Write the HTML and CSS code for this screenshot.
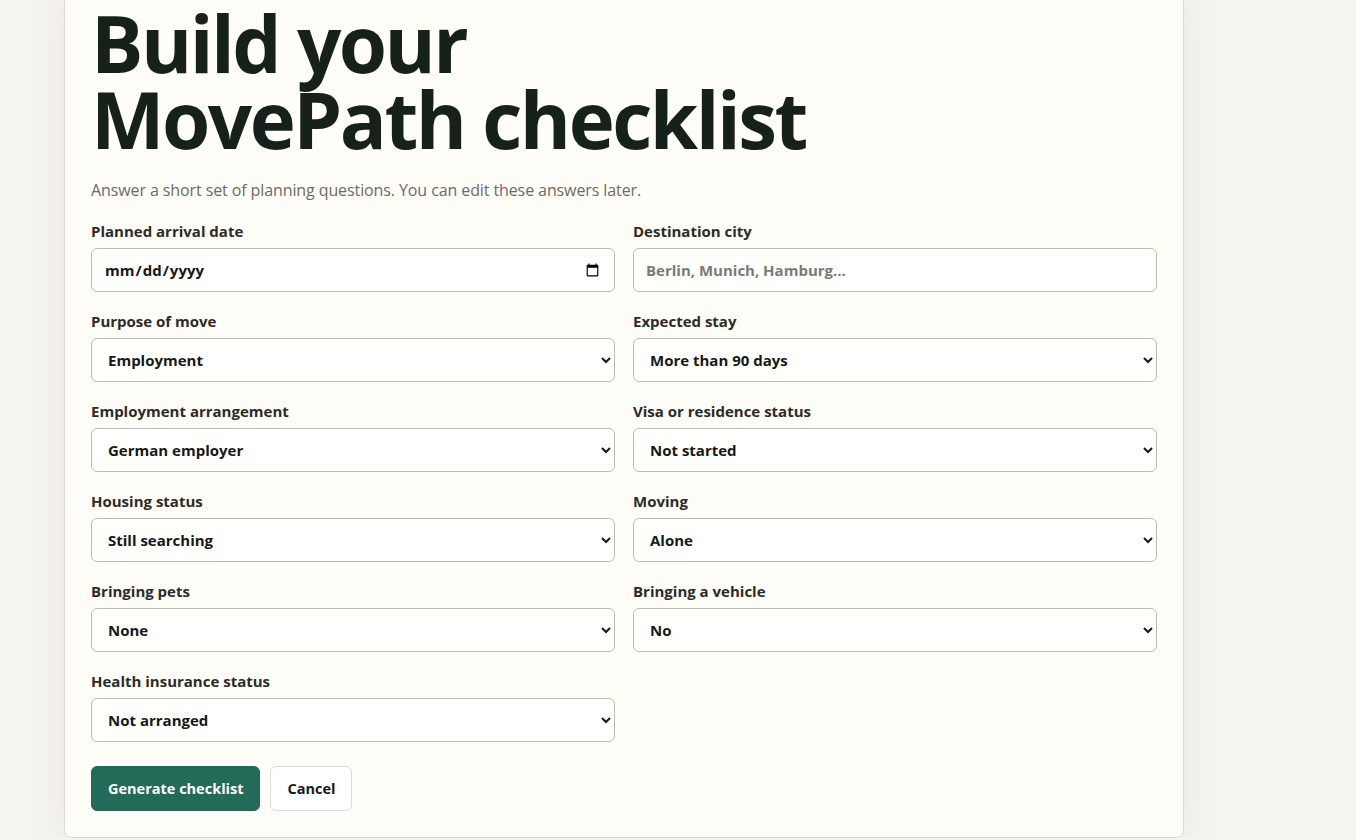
FILE: index.html
```html
<!DOCTYPE html>
<html lang="en">
<head>
    <meta charset="UTF-8">
    <meta name="viewport" content="width=device-width, initial-scale=1.0">
    <title>Build your MovePath checklist</title>
    <link rel="stylesheet" href="styles.css">
</head>
<body>
    <main class="page">
        <section class="card">
            <h1>Build your<br>MovePath checklist</h1>
            <p class="intro">Answer a short set of planning questions. You can edit these answers later.</p>

            <form class="form-grid" onsubmit="return false;">
                <div class="field">
                    <label for="arrival">Planned arrival date</label>
                    <input type="date" id="arrival">
                </div>
                <div class="field">
                    <label for="city">Destination city</label>
                    <input type="text" id="city" placeholder="Berlin, Munich, Hamburg...">
                </div>

                <div class="field">
                    <label for="purpose">Purpose of move</label>
                    <select id="purpose">
                        <option>Employment</option>
                        <option>Study</option>
                        <option>Family</option>
                    </select>
                </div>
                <div class="field">
                    <label for="stay">Expected stay</label>
                    <select id="stay">
                        <option>More than 90 days</option>
                        <option>Less than 90 days</option>
                    </select>
                </div>

                <div class="field">
                    <label for="employment">Employment arrangement</label>
                    <select id="employment">
                        <option>German employer</option>
                        <option>Remote for foreign employer</option>
                        <option>Self-employed</option>
                    </select>
                </div>
                <div class="field">
                    <label for="visa">Visa or residence status</label>
                    <select id="visa">
                        <option>Not started</option>
                        <option>In progress</option>
                        <option>Approved</option>
                    </select>
                </div>

                <div class="field">
                    <label for="housing">Housing status</label>
                    <select id="housing">
                        <option>Still searching</option>
                        <option>Temporary housing</option>
                        <option>Signed lease</option>
                    </select>
                </div>
                <div class="field">
                    <label for="moving">Moving</label>
                    <select id="moving">
                        <option>Alone</option>
                        <option>With partner</option>
                        <option>With family</option>
                    </select>
                </div>

                <div class="field">
                    <label for="pets">Bringing pets</label>
                    <select id="pets">
                        <option>None</option>
                        <option>Dog</option>
                        <option>Cat</option>
                    </select>
                </div>
                <div class="field">
                    <label for="vehicle">Bringing a vehicle</label>
                    <select id="vehicle">
                        <option>No</option>
                        <option>Yes</option>
                    </select>
                </div>

                <div class="field">
                    <label for="insurance">Health insurance status</label>
                    <select id="insurance">
                        <option>Not arranged</option>
                        <option>Public</option>
                        <option>Private</option>
                    </select>
                </div>
            </form>

            <div class="actions">
                <button class="btn btn-primary">Generate checklist</button>
                <button class="btn btn-secondary">Cancel</button>
            </div>
        </section>
    </main>
</body>
</html>
```

FILE: styles.css
```css
body {
    margin: 0;
    background-color: #f5f4ef;
    font-family: "Open Sans", "Noto Sans", Arial, sans-serif;
    color: #1b241f;
}
.page {
    padding-left: 64px;
}
.card {
    box-sizing: border-box;
    width: 1120px;
    margin-top: -22px;
    padding: 26px;
    background-color: #fffdf8;
    border: 1px solid #dcdad3;
    border-radius: 8px;
    box-shadow: 0 10px 40px rgba(40, 40, 20, 0.06);
}
h1 {
    margin: 0 0 21px;
    font-size: 78px;
    line-height: 76px;
    font-weight: 700;
    color: #17211b;
    letter-spacing: -2.5px;
}
.intro {
    margin: 0 0 19px;
    font-size: 16px;
    line-height: 24px;
    color: #6b6b66;
    letter-spacing: -0.1px;
}
.form-grid {
    display: grid;
    grid-template-columns: 1fr 1fr;
    column-gap: 18px;
    row-gap: 19px;
}
.field label {
    display: block;
    font-size: 15px;
    line-height: 20px;
    font-weight: 700;
    color: #2b2b28;
    margin-bottom: 7px;
}
.field input,
.field select {
    box-sizing: border-box;
    width: 100%;
    height: 44px;
    padding: 0 12px;
    border: 1px solid #bdbbb5;
    border-radius: 6px;
    background-color: #fffffd;
    font-family: inherit;
    font-size: 15px;
    font-weight: 700;
    color: #16181a;
}
.field input::placeholder {
    color: #7a7a78;
}
.actions {
    display: flex;
    gap: 10px;
    margin-top: 24px;
}
.btn {
    height: 45px;
    padding: 0 16px;
    border-radius: 6px;
    font-family: inherit;
    font-size: 14.5px;
    font-weight: 700;
    cursor: pointer;
}
.btn-primary {
    background-color: #236a59;
    border: 1px solid #236a59;
    color: #ffffff;
}
.btn-secondary {
    background-color: #ffffff;
    border: 1px solid #dcdad3;
    color: #16181a;
}
```
